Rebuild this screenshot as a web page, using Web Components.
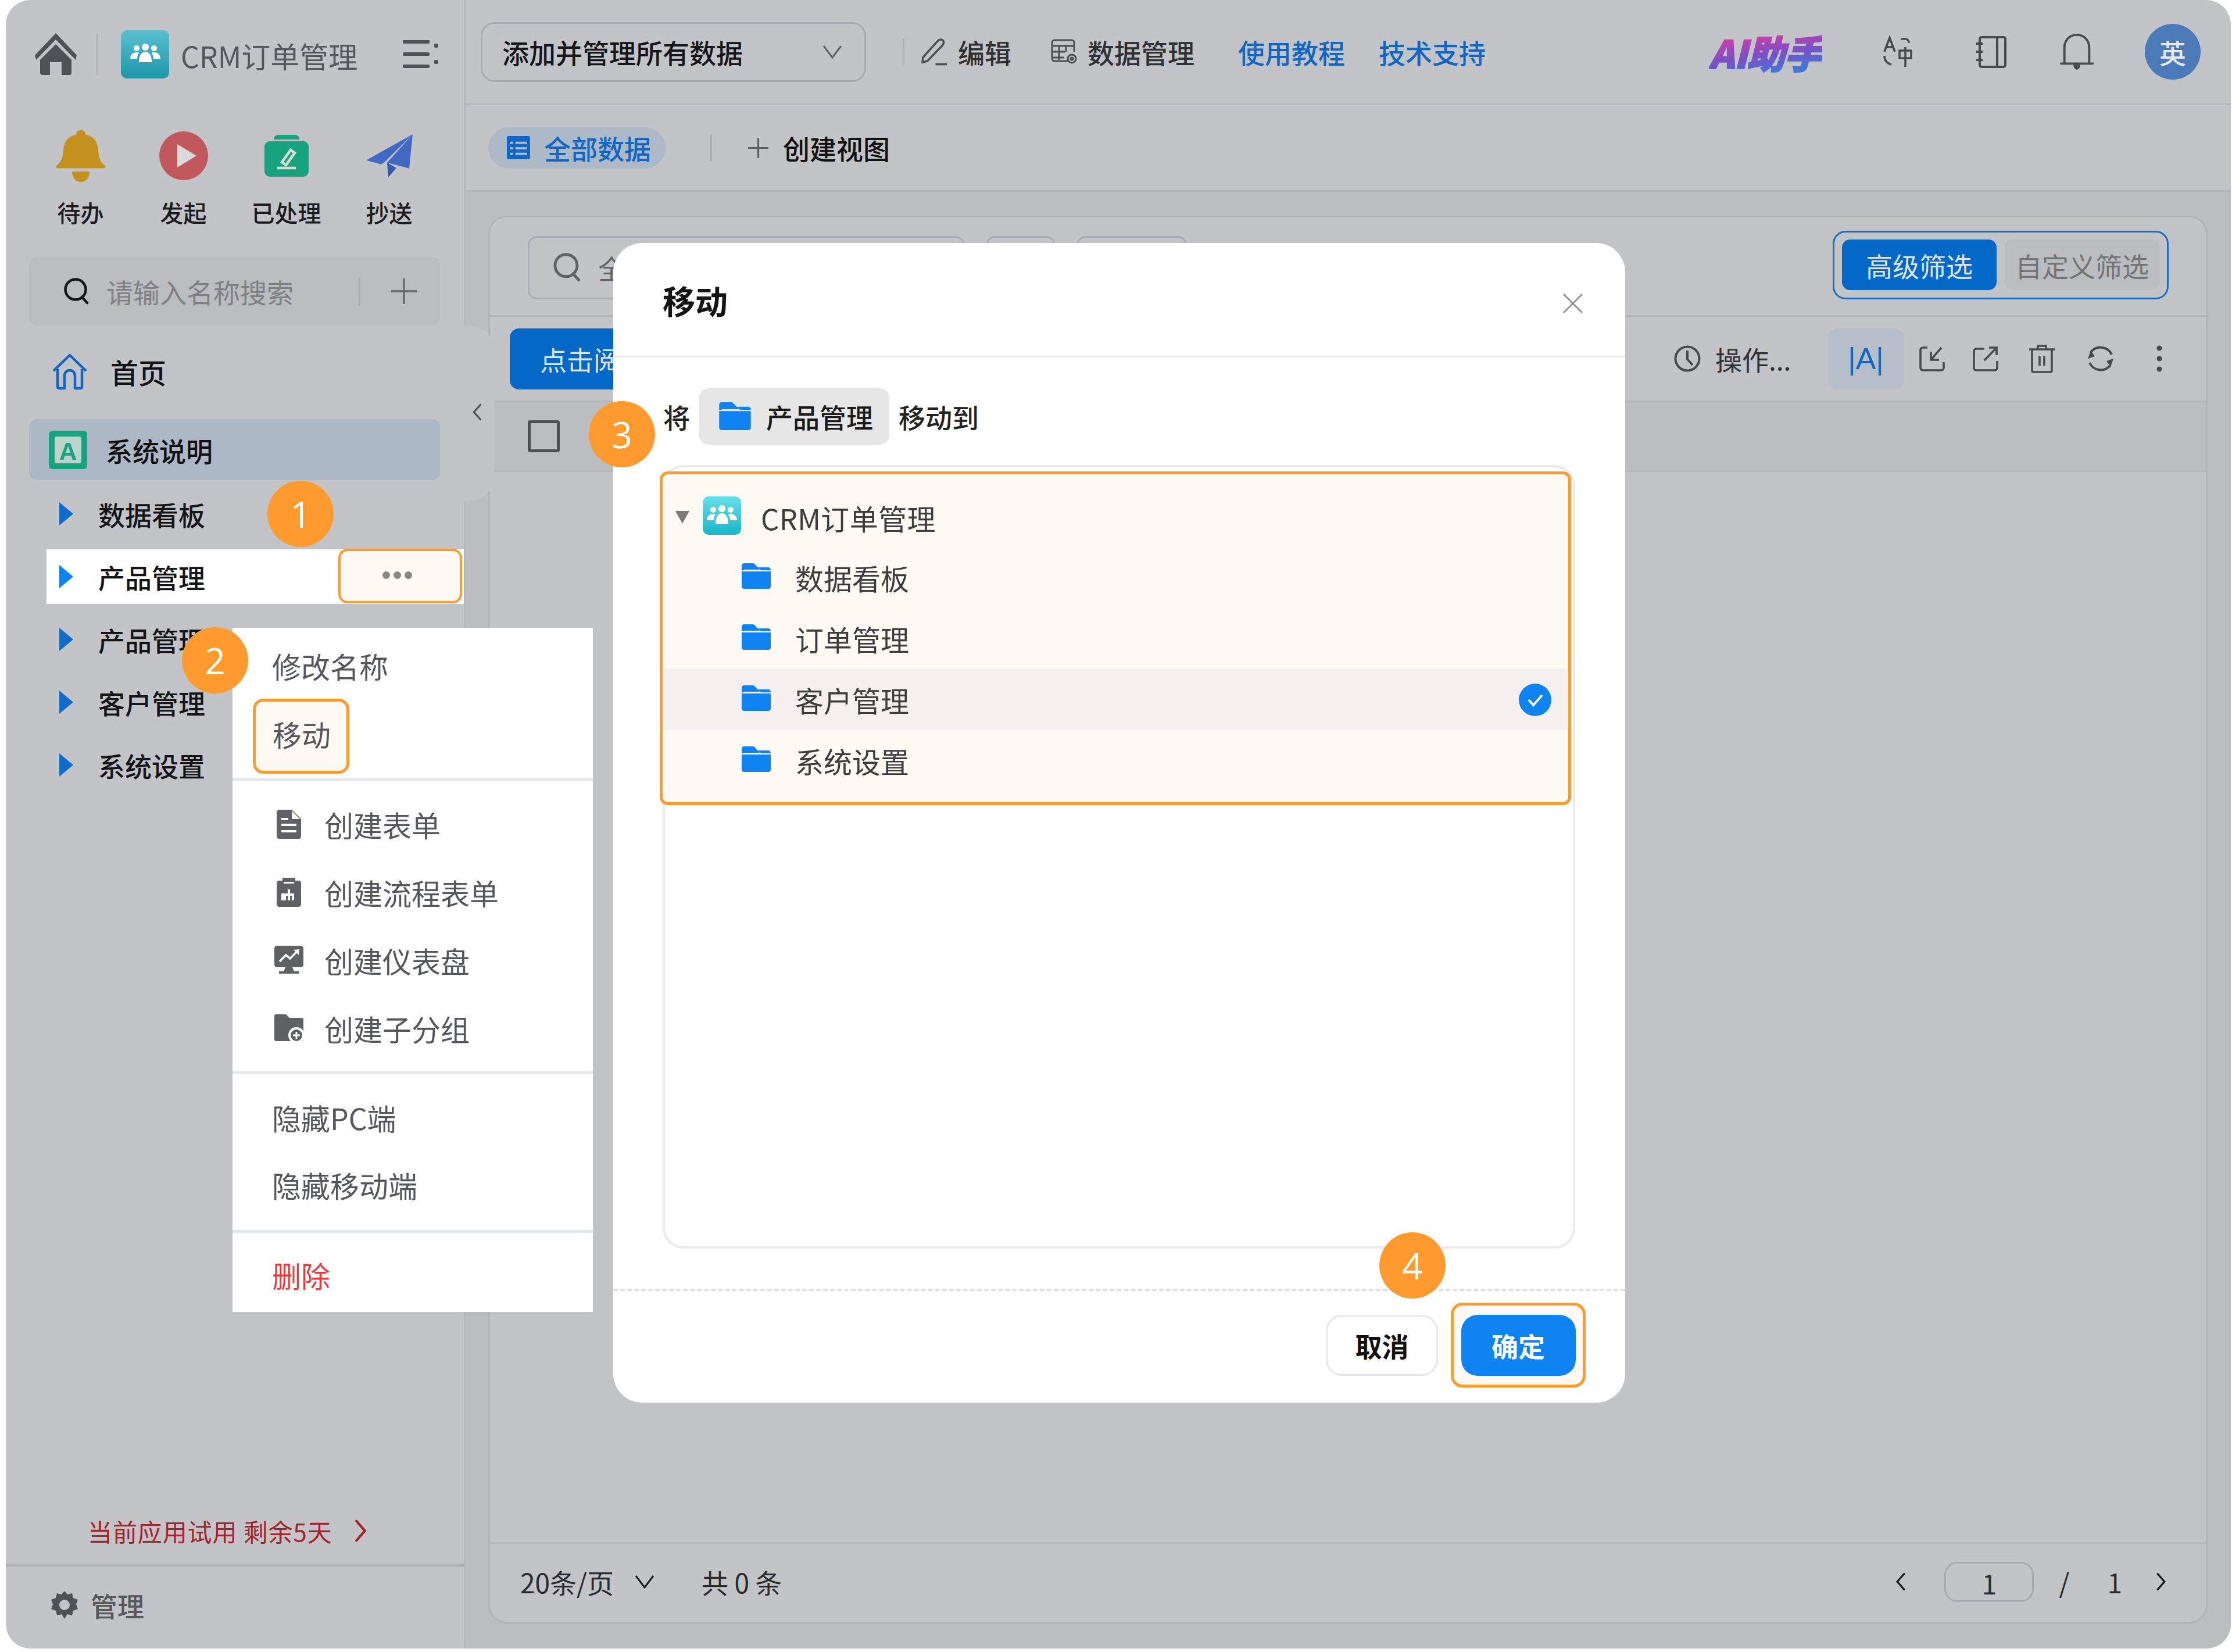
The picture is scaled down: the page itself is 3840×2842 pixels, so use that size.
<!DOCTYPE html>
<html lang="zh-CN">
<head>
<meta charset="utf-8">
<title>CRM订单管理</title>
<style>
    html, body { margin: 0; padding: 0; background: #fff; }
    body {
        position: relative;
        width: 3840px;
        height: 2842px;
        overflow: hidden;
        font-family: "Noto Sans CJK SC", "Liberation Sans", sans-serif;
        color: #111;
    }
</style>
</head>
<body>
<app-shell>
    <app-sidebar slot="side"></app-sidebar>
    <top-bar slot="main"></top-bar>
    <tab-bar slot="main"></tab-bar>
    <data-card slot="main"></data-card>
</app-shell>
<context-menu></context-menu>
<move-dialog></move-dialog>
<step-badge n="1" x="517" y="884"></step-badge>
<step-badge n="2" x="370" y="1136"></step-badge>
<step-badge n="3" x="1070" y="747"></step-badge>
<step-badge n="4" x="2430" y="2177"></step-badge>

<script>
const ICONS = {
    home: `<svg viewBox="0 0 72 72"><path fill="currentColor" d="M36 0 72 38l-2 8-34-35L2 46l-2-8z"/><path fill="currentColor" d="M36 19 63 46v22a4 4 0 0 1-4 4H46V50H26v22H13a4 4 0 0 1-4-4V46z"/></svg>`,
    menu: `<svg viewBox="0 0 62 48" fill="currentColor"><rect x="0" y="0" width="46" height="6" rx="2"/><rect x="0" y="21" width="46" height="6" rx="2"/><rect x="0" y="42" width="46" height="6" rx="2"/><rect x="54" y="6" width="7" height="7" rx="2"/><rect x="54" y="34" width="7" height="7" rx="2"/></svg>`,
    group: `<svg viewBox="0 0 66 66" fill="#fff"><circle cx="33" cy="21" r="6"/><circle cx="18" cy="23" r="5"/><circle cx="48" cy="23" r="5"/><path d="M22 47c0-12 5-18 11-18s11 6 11 18z"/><path d="M7 41c0-7 5-11 11-11 2 0 3 0 4 1-2 3-3 6-3 10zM59 41c0-7-5-11-11-11-2 0-3 0-4 1 2 3 3 6 3 10z"/></svg>`,
    bell: `<svg viewBox="0 0 84 118" preserveAspectRatio="none"><path fill="#c4901e" d="M42 0c5 0 8 4 8 10 16 5 21 18 22 36 1 15 3 27 12 35 1 3 0 6-3 6H3c-3 0-4-3-3-6 9-8 11-20 12-35 1-18 6-31 22-36 0-6 3-10 8-10z"/><path fill="#c4901e" d="M27 94h30c0 14-6 24-15 24s-15-10-15-24z"/></svg>`,
    play: `<svg viewBox="0 0 84 84"><circle cx="42" cy="42" r="42" fill="#c0585c"/><path fill="#d9d9dc" d="M31 22 64 42 31 62z"/></svg>`,
    done: `<svg viewBox="0 0 76 72" preserveAspectRatio="none"><path fill="#17a37d" d="M24 0h28c5 0 8 3 8 8H16c0-5 3-8 8-8z"/><rect y="11" width="76" height="61" rx="9" fill="#17a37d"/><path fill="none" stroke="#d5dcd9" stroke-width="4.5" d="M22 57h32M30 47 45 26l7 5-15 21z"/></svg>`,
    send: `<svg viewBox="0 0 80 106" preserveAspectRatio="none"><path fill="#4169c4" d="M80 0 0 64l26 10 6-6z"/><path fill="#4169c4" d="M80 0 36 70l38 14z"/><path fill="#3459b0" d="M36 70 38 106l14-23z"/></svg>`,
    search: `<svg viewBox="0 0 42 46" fill="none" stroke="currentColor" stroke-width="4.5"><circle cx="20" cy="20" r="17.5"/><path d="m31 33 9 10" stroke-linecap="round"/></svg>`,
    plus: `<svg viewBox="0 0 44 44" stroke="currentColor" stroke-width="4"><path d="M22 0v44M0 22h44"/></svg>`,
    house: `<svg viewBox="0 0 60 62" fill="none" stroke="currentColor" stroke-width="4.5" stroke-linejoin="round"><path d="M2 30 30 3l28 27M9 27v30c0 2 1 3 3 3h9V38a9 9 0 0 1 18 0v22h9c2 0 3-1 3-3V27"/></svg>`,
    letter: `<svg viewBox="0 0 66 66"><rect width="66" height="66" rx="6" fill="#17a37d"/><rect x="10" y="10" width="46" height="46" rx="4" fill="#bcd3cb"/><text x="33" y="50" font-size="42" font-weight="700" text-anchor="middle" fill="#17a37d" font-family="Liberation Sans">A</text></svg>`,
    caret: `<svg viewBox="0 0 24 40"><path fill="currentColor" d="M0 0 24 20 0 40z"/></svg>`,
    chevDown: `<svg viewBox="0 0 34 24" fill="none" stroke="currentColor" stroke-width="3"><path d="m2 2 15 20L32 2"/></svg>`,
    chevLeft: `<svg viewBox="0 0 20 36" fill="none" stroke="currentColor" stroke-width="4" stroke-linecap="round"><path d="M17 2 3 18l14 16"/></svg>`,
    chevRight: `<svg viewBox="0 0 20 36" fill="none" stroke="currentColor" stroke-width="4" stroke-linecap="round"><path d="m3 2 14 16L3 34"/></svg>`,
    pencil: `<svg viewBox="0 0 48 48" fill="none" stroke="currentColor" stroke-width="3.6" stroke-linejoin="round"><path d="M4 34 30 5c3-3 7-3 9-1s2 6-1 9L12 40l-9 3z"/><path d="M26 46h20"/></svg>`,
    datagrid: `<svg viewBox="0 0 46 44" fill="none" stroke="currentColor" stroke-width="3"><path d="M30 38H6c-2 0-4-2-4-4V6c0-2 2-4 4-4h30c2 0 4 2 4 4v16"/><path d="M2 12h38M2 22h22M2 32h20M14 12v24M26 12v10"/><circle cx="36" cy="34" r="7"/><circle cx="36" cy="34" r="2"/></svg>`,
    translate: `<svg viewBox="0 0 52 52" preserveAspectRatio="none" fill="none" stroke="currentColor" stroke-width="3.6"><path d="M4 26 13 2l9 24M8 18h10"/><path d="M32 4h8c4 0 6 3 6 7M4 33c0 8 4 13 12 15"/><path d="M30 24h20v13H30zM40 18v34"/></svg>`,
    book: `<svg viewBox="0 0 52 55" preserveAspectRatio="none" fill="none" stroke="currentColor" stroke-width="4"><rect x="6" y="2" width="44" height="51" rx="3"/><path d="M36 2v51M0 13h11M0 27h11M0 41h11" /></svg>`,
    notify: `<svg viewBox="0 0 60 66" fill="none" stroke="currentColor" stroke-width="4" stroke-linejoin="round" stroke-linecap="round"><path d="M8 54V26C8 12 18 3 30 3s22 9 22 23v28M2 54h56"/><path d="M25 56c0 4 2 8 5 8s5-4 5-8" fill="currentColor" stroke-width="2"/></svg>`,
    table: `<svg viewBox="0 0 38 38"><rect width="38" height="38" rx="3" fill="currentColor"/><path stroke="#b4bfcc" stroke-width="3.5" d="M5 11h5M14 11h19M5 20h5M14 20h19M5 29h5M14 29h19"/></svg>`,
    clock: `<svg viewBox="0 0 46 46" fill="none" stroke="currentColor" stroke-width="4"><circle cx="23" cy="23" r="20.5"/><path d="M23 9v15l9 10"/></svg>`,
    importIcon: `<svg viewBox="0 0 44 44" fill="none" stroke="currentColor" stroke-width="3.6"><path d="M14 3H6C4 3 2 5 2 7v31c0 2 2 4 4 4h32c2 0 4-2 4-4V28"/><path d="M38 3 20 24M20 10v14h14"/></svg>`,
    exportIcon: `<svg viewBox="0 0 44 44" fill="none" stroke="currentColor" stroke-width="3.6"><path d="M20 5H6C4 5 2 7 2 9v29c0 2 2 4 4 4h32c2 0 4-2 4-4V26"/><path d="M20 25 41 3M28 3h13v13"/></svg>`,
    trash: `<svg viewBox="0 0 44 50" fill="none" stroke="currentColor" stroke-width="3.6"><path d="M0 9h44M15 9V3h14v6M5 9v37c0 1 1 2 2 2h30c1 0 2-1 2-2V9M18 21v16M26 21v16"/></svg>`,
    refresh: `<svg viewBox="0 0 48 48" fill="none" stroke="currentColor" stroke-width="4"><path d="M7 13A21 21 0 0 1 43 17M41 35A21 21 0 0 1 5 31"/><path fill="currentColor" stroke="none" d="m2 24 5-14 7 10zM46 24l-5 14-7-10z"/></svg>`,
    kebab: `<svg viewBox="0 0 12 46" fill="currentColor"><circle cx="6" cy="5" r="4.5"/><circle cx="6" cy="23" r="4.5"/><circle cx="6" cy="41" r="4.5"/></svg>`,
    gear: `<svg viewBox="0 0 46 48"><path fill="currentColor" fill-rule="evenodd" d="M23 0l5 6 8-2 2 8 8 3-3 8 3 8-8 3-2 8-8-2-5 8-5-8-8 2-2-8-8-3 3-8-3-8 8-3 2-8 8 2zM23 15a9 9 0 1 0 0 18 9 9 0 0 0 0-18z"/></svg>`,
    folder: `<svg viewBox="0 0 50 44"><path fill="currentColor" d="M4 0h15c2 0 3 1 4 2l8 9H4zM0 14h50V40c0 2-2 4-4 4H4c-2 0-4-2-4-4zM0 4c0-2 2-4 4-4v12H0z"/><path fill="currentColor" d="M27 7h19c2 0 4 2 4 5H33z"/></svg>`,
    fileDoc: `<svg viewBox="0 0 42 50"><path fill="currentColor" d="M4 0h22l16 16v30c0 2-2 4-4 4H4c-2 0-4-2-4-4V4c0-2 2-4 4-4z"/><path fill="#fff" d="M26 2v14h14zM8 24h26v4H8zM8 35h26v4H8z"/><path fill="#fff" d="M8 14h12v4H8z"/></svg>`,
    flowDoc: `<svg viewBox="0 0 42 50"><path fill="currentColor" d="M10 0h22v5h6c2 0 4 2 4 4v37c0 2-2 4-4 4H4c-2 0-4-2-4-4V9c0-2 2-4 4-4h6z"/><path fill="#fff" d="M12 10h18v-3H12zM19 20h4v7h7v12h-4v-8h-3v8h-4v-8h-3v8H8V27h11z"/></svg>`,
    board: `<svg viewBox="0 0 50 50"><path fill="currentColor" d="M5 0h40c3 0 5 2 5 5v27c0 3-2 5-5 5H31l3 7h8v4H8v-4h8l3-7H5c-3 0-5-2-5-5V5c0-3 2-5 5-5z"/><path fill="none" stroke="#fff" stroke-width="3.5" d="m9 27 11-11 7 6 12-12"/><path fill="#fff" d="m33 7 10-1-1 10z"/></svg>`,
    subfolder: `<svg viewBox="0 0 50 48"><path fill="currentColor" d="M3 0h17l6 6h21c2 0 3 1 3 3v34c0 2-1 3-3 3H3c-2 0-3-1-3-3V3c0-2 1-3 3-3z"/><circle cx="38" cy="36" r="14" fill="#fff"/><circle cx="38" cy="36" r="10" fill="currentColor"/><path stroke="#fff" stroke-width="3" d="M38 30v12M32 36h12"/></svg>`,
    close: `<svg viewBox="0 0 34 34" fill="none" stroke="currentColor" stroke-width="2.6"><path d="m1 1 32 32M33 1 1 33"/></svg>`,
    check: `<svg viewBox="0 0 56 56"><circle cx="28" cy="28" r="28" fill="#1083f2"/><path fill="none" stroke="#fff" stroke-width="4" d="m17 28 8 9 15-17"/></svg>`,
    caretDown: `<svg viewBox="0 0 24 22"><path fill="currentColor" d="M0 0h24L12 22z"/></svg>`,
};

// small inline svg icon, size comes from the w and h attributes
class UiIcon extends HTMLElement {
    constructor() {
        super();
        this.attachShadow({mode: 'open'});
    }
    connectedCallback() {
        const w = this.getAttribute('w') || 40;
        const h = this.getAttribute('h') || w;
        this.shadowRoot.innerHTML = `
            <style>
                :host { display: inline-flex; flex: none; width: ${w}px; height: ${h}px; }
                svg { width: 100%; height: 100%; display: block; overflow: visible; }
            </style>
            ${ICONS[this.getAttribute('name')]}`;
    }
}

class AppIcon extends HTMLElement {
    constructor() {
        super();
        const root = this.attachShadow({mode: 'open'});
        root.innerHTML = `
            <style>
                :host { display: flex; flex: none; align-items: center; justify-content: center; border-radius: 10px;
                    width: var(--size, 66px); height: var(--size-h, 66px);
                    background: linear-gradient(180deg, var(--top, #5bc0cf), var(--bottom, #1c96a8)); }
            </style>
            <ui-icon name="group" w="66" h="66"></ui-icon>`;
    }
}

class AppShell extends HTMLElement {
    constructor() {
        super();
        const root = this.attachShadow({mode: 'open'});
        root.innerHTML = `
            <style>
                :host { display: flex; margin-left: 10px; width: 3828px; height: 2836px; overflow: hidden;
                    border-radius: 42px; background: #c3c4c8; position: relative; }
                .side { display: flex; flex: none; width: 788px; }
                .main { flex: 1; min-width: 0; display: flex; flex-direction: column; border-left: 3px solid #b4b6bb; }
            </style>
            <div class="side"><slot name="side"></slot></div>
            <div class="main"><slot name="main"></slot></div>`;
    }
}

class AppSidebar extends HTMLElement {
    constructor() {
        super();
        const root = this.attachShadow({mode: 'open'});
        const shortcut = (icon, w, h, label) => `
            <div class="shortcut">
                <div class="sc-icon"><ui-icon name="${icon}" w="${w}" h="${h}"></ui-icon></div>
                <span>${label}</span>
            </div>`;
        root.innerHTML = `
            <style>
                :host { display: flex; flex-direction: column; width: 100%; height: 100%; position: relative; }
                .logo { height: 186px; flex: none; display: flex; align-items: center; padding-left: 50px; color: #4f5156; }
                .sep { width: 3px; height: 72px; background: #b2b4b8; margin: 0 39px 0 34px; }
                app-icon { --size: 83px; --size-h: 83px; margin-right: 20px; }
                .name { font-size: 50px; line-height: 60px; color: #55575c; width: 382px; white-space: nowrap; padding-top: 4px; }
                .shortcuts { display: grid; grid-template-columns: repeat(4, 177px); padding: 28px 0 0 40px; height: 228px; box-sizing: border-box; }
                .shortcut { display: flex; flex-direction: column; align-items: center; font-size: 40px; line-height: 56px; color: #1c1c1e; font-weight: 500; }
                .sc-icon { height: 108px; display: flex; align-items: center; margin-bottom: 15px; }
                .search { margin: 28px 41px 0 40px; height: 118px; flex: none; background: #bbbcc0; border-radius: 14px;
                    display: flex; align-items: center; padding-left: 60px; box-sizing: border-box; color: #15161a; }
                .search span { font-size: 46px; color: #7e8084; margin-left: 31px; width: 434px; }
                .search i { width: 3px; height: 48px; background: #a9abaf; }
                .search .plus { color: #6f7175; margin-left: 53px; }
                .home { height: 161px; flex: none; display: flex; align-items: center; padding-left: 80px; font-size: 48px; color: #121316; padding-bottom: 4px; box-sizing: border-box; font-weight: 500; }
                .home ui-icon { color: #1066c5; margin-right: 40px; }
                .selected { margin: 0 41px 0 40px; height: 105px; flex: none; background: #acb8c6; border-radius: 14px; display: flex;
                    align-items: center; padding-left: 34px; font-size: 46px; color: #111; font-weight: 500; }
                .selected ui-icon { margin-right: 32px; }
                .tree { flex: none; margin-top: 4px; display: flex; flex-direction: column; }
                .row { height: 94px; margin: 7px 0 7px 70px; display: flex; align-items: center; font-size: 46px; color: #141518; padding-left: 22px; font-weight: 500; }
                .row ui-icon { color: #0f6cc9; margin-right: 43px; }
                .row.hot { background: #fff; position: relative; }
                .row.hot ui-icon { color: #1083f2; }
                .more { position: absolute; right: 3px; top: -1px; width: 213px; height: 94px; box-sizing: border-box;
                    background: #fef9f3; border: 4px solid #ff9a2e; border-radius: 16px; display: flex; align-items: center; justify-content: center; gap: 6px; padding: 0 10px 4px 0; }
                .more b { width: 13px; height: 13px; border-radius: 50%; background: #8a8885; }
                .fill { flex: 1; }
                .trial { height: 80px; flex: none; display: flex; align-items: center; padding-left: 141px; font-size: 42px; color: #a5222a; white-space: nowrap; margin-bottom: 17px; letter-spacing: .9px; }
                .trial ui-icon { margin-left: 38px; }
                .manage { height: 146px; flex: none; border-top: 5px solid #adafb3; box-sizing: border-box; display: flex; align-items: center; padding: 0 0 10px 78px;
                    font-size: 46px; color: #56585c; font-weight: 500; }
                .manage ui-icon { margin-right: 22px; color: #4f5156; }
                .bump { position: absolute; left: 788px; top: 560px; width: 52px; height: 302px; background: #c3c4c8; border-radius: 0 42px 42px 0;
                    display: flex; align-items: center; justify-content: center; color: #4f5156; z-index: 3; padding: 0 6px 4px 0; box-sizing: border-box; }
            </style>
            <div class="logo">
                <ui-icon name="home" w="72" h="72"></ui-icon>
                <div class="sep"></div>
                <app-icon></app-icon>
                <span class="name">CRM订单管理</span>
                <ui-icon name="menu" w="62" h="48"></ui-icon>
            </div>
            <div class="shortcuts">
                ${shortcut('bell', 84, 89, '待办')}
                ${shortcut('play', 84, 84, '发起')}
                ${shortcut('done', 76, 72, '已处理')}
                ${shortcut('send', 80, 74, '抄送')}
            </div>
            <div class="search">
                <ui-icon name="search" w="42" h="46"></ui-icon>
                <span>请输入名称搜索</span>
                <i></i>
                <ui-icon class="plus" name="plus" w="44" h="44"></ui-icon>
            </div>
            <div class="home"><ui-icon name="house" w="60" h="62"></ui-icon>首页</div>
            <div class="selected"><ui-icon name="letter" w="66" h="66"></ui-icon>系统说明</div>
            <div class="tree">
                <div class="row"><ui-icon name="caret" w="24" h="40"></ui-icon>数据看板</div>
                <div class="row hot"><ui-icon name="caret" w="24" h="40"></ui-icon>产品管理<div class="more"><b></b><b></b><b></b></div></div>
                <div class="row"><ui-icon name="caret" w="24" h="40"></ui-icon>产品管理</div>
                <div class="row"><ui-icon name="caret" w="24" h="40"></ui-icon>客户管理</div>
                <div class="row"><ui-icon name="caret" w="24" h="40"></ui-icon>系统设置</div>
            </div>
            <div class="fill"></div>
            <div class="trial">当前应用试用 剩余5天<ui-icon name="chevRight" w="21" h="39"></ui-icon></div>
            <div class="manage"><ui-icon name="gear" w="46" h="48"></ui-icon>管理</div>
            <div class="bump"><ui-icon name="chevLeft" w="16" h="36"></ui-icon></div>`;
    }
}

class TopBar extends HTMLElement {
    constructor() {
        super();
        const root = this.attachShadow({mode: 'open'});
        root.innerHTML = `
            <style>
                :host { display: flex; align-items: center; flex: none; height: 181px; box-sizing: border-box; border-bottom: 3px solid #b4b6bb;
                    padding: 0 52px 0 26px; font-size: 46px; color: #2a2b2e; white-space: nowrap; font-weight: 500; }
                .select { width: 663px; height: 103px; box-sizing: border-box; border: 3px solid #a8abb2; border-radius: 24px; display: flex;
                    align-items: center; padding: 0 38px 0 34px; color: #15161a; justify-content: space-between; }
                .select ui-icon { color: #606266; }
                .sep { width: 3px; height: 46px; background: #abadb2; margin: 0 28px 0 63px; }
                .item { display: flex; align-items: center; color: #2f3033; }
                .item ui-icon { color: #4c4e52; margin-right: 17px; }
                .link { color: #0f66c4; }
                .ai { font-size: 66px; font-weight: 900; font-style: italic; letter-spacing: -1px; line-height: 78px;
                    background: linear-gradient(172deg, #d33ca5 18%, #7a50c8 55%, #3f78d8 88%); -webkit-background-clip: text; background-clip: text; color: transparent;
                    -webkit-text-stroke: 2px transparent; }
                .fill { flex: 1; }
                ui-icon.tool { color: #47494d; }
                .avatar { width: 96px; height: 96px; border-radius: 50%; background: #4a7ab8; color: #e6e8ee; display: flex; align-items: center; justify-content: center; font-size: 46px; }
            </style>
            <div class="select">添加并管理所有数据<ui-icon name="chevDown" w="34" h="24"></ui-icon></div>
            <div class="sep"></div>
            <div class="item" style="margin-right:68px"><ui-icon name="pencil" w="47" h="48"></ui-icon>编辑</div>
            <div class="item" style="margin-right:75px"><ui-icon name="datagrid" w="46" h="44"></ui-icon>数据管理</div>
            <div class="link" style="margin-right:58px">使用教程</div>
            <div class="link">技术支持</div>
            <div class="fill"></div>
            <div class="ai">AI助手</div>
            <ui-icon class="tool" name="translate" w="52" h="52" style="margin-left:103px"></ui-icon>
            <ui-icon class="tool" name="book" w="52" h="55" style="margin-left:110px"></ui-icon>
            <ui-icon class="tool" name="notify" w="60" h="64" style="margin-left:91px"></ui-icon>
            <div class="avatar" style="margin-left:87px">英</div>`;
    }
}

class TabBar extends HTMLElement {
    constructor() {
        super();
        const root = this.attachShadow({mode: 'open'});
        root.innerHTML = `
            <style>
                :host { display: flex; align-items: center; flex: none; height: 149px; box-sizing: border-box; border-bottom: 3px solid #b4b6bb;
                    padding: 0 0 0 39px; font-size: 46px; font-weight: 500; }
                .chip { width: 305px; height: 71px; border-radius: 36px; background: #adb9c7; color: #0f66c4; display: flex; align-items: center; padding-left: 32px; box-sizing: border-box; }
                .chip ui-icon { margin-right: 24px; }
                i { width: 3px; height: 46px; background: #abadb2; margin-left: 77px; margin-right: 62px; }
                .plus { color: #5b5d61; margin-right: 25px; }
            </style>
            <div class="chip"><ui-icon name="table" w="40" h="40"></ui-icon>全部数据</div>
            <i></i>
            <ui-icon class="plus" name="plus" w="35" h="35"></ui-icon>
            <span>创建视图</span>`;
    }
}

class DataCard extends HTMLElement {
    constructor() {
        super();
        const root = this.attachShadow({mode: 'open'});
        const tool = (name, w, h, x) => `<ui-icon name="${name}" w="${w}" h="${h}" style="margin-left:${x}px"></ui-icon>`;
        root.innerHTML = `
            <style>
                :host { flex: 1; min-height: 0; display: flex; background: #bcbdc1; padding: 41px 40px 43px 39px; box-sizing: border-box; }
                .card { flex: 1; display: flex; flex-direction: column; background: #c3c4c8; border: 3px solid #b2b4b9; border-radius: 32px; box-sizing: border-box; font-size: 46px; overflow: hidden; }
                .filters { height: 171px; flex: none; display: flex; align-items: center; padding: 0 64px 0 65px; border-bottom: 3px solid #b4b6bb; box-sizing: border-box; }
                .input { width: 752px; height: 109px; border: 3px solid #a8abb2; border-radius: 16px; box-sizing: border-box; display: flex; align-items: center; padding-left: 40px; color: #606266; margin-top: 4px; }
                .input span { margin-left: 30px; }
                .box { height: 109px; border: 3px solid #a8abb2; border-radius: 16px; box-sizing: border-box; margin: 4px 0 0 36px; }
                .fill { flex: 1; }
                .seg { width: 578px; height: 118px; box-sizing: border-box; border: 3px solid #1a6fc4; border-radius: 22px; display: flex; align-items: center; gap: 14px; padding: 0 13px; margin-top: -5px; }
                .seg div { flex: 1; height: 87px; border-radius: 14px; display: flex; align-items: center; justify-content: center; background: #bbbcc0; color: #727376; }
                .seg div.on { background: #0468c8; color: #dfe3ea; }
                .actions { height: 147px; flex: none; display: flex; align-items: center; padding: 0 74px 0 34px; border-bottom: 3px solid #b4b6bb; box-sizing: border-box; color: #47494d; }
                .read { width: 300px; height: 105px; border-radius: 16px; background: #0468c8; color: #dfe3ea; display: flex; align-items: center; padding-left: 52px; box-sizing: border-box; }
                .op { color: #2f3033; margin-left: 25px; width: 193px; }
                .aa { width: 132px; height: 105px; border-radius: 16px; background: #b5bec9; color: #0f66c4; display: flex; align-items: center; justify-content: center; font-size: 52px; font-family: "Liberation Sans", sans-serif; }
                .head { height: 120px; flex: none; background: #bcbdc1; border-bottom: 3px solid #b4b6bb; box-sizing: border-box; display: flex; align-items: center; padding-left: 65px; }
                .check { width: 55px; height: 55px; box-sizing: border-box; border: 5px solid #4d4f53; border-radius: 4px; }
                .foot { height: 137px; flex: none; border-top: 3px solid #b4b6bb; box-sizing: border-box; display: flex; align-items: center; padding: 0 68px 4px 52px; color: #2a2b2e; font-size: 46px; }
                .foot ui-icon { color: #1a1b1e; }
                .page { width: 154px; height: 69px; box-sizing: border-box; border: 3px solid #a8abb2; border-radius: 22px; text-align: center; line-height: 66px; margin: 0 43px 0 66px; }
            </style>
            <div class="card">
                <div class="filters">
                    <div class="input"><ui-icon name="search" w="48" h="50"></ui-icon><span>全部</span></div>
                    <div class="box" style="width:120px"></div>
                    <div class="box" style="width:190px"></div>
                    <div class="fill"></div>
                    <div class="seg"><div class="on">高级筛选</div><div>自定义筛选</div></div>
                </div>
                <div class="actions">
                    <div class="read">点击阅读</div>
                    <div class="fill"></div>
                    <ui-icon name="clock" w="46" h="46"></ui-icon>
                    <span class="op">操作...</span>
                    <div class="aa">|A|</div>
                    ${tool('importIcon', 44, 44, 26)}
                    ${tool('exportIcon', 44, 44, 48)}
                    ${tool('trash', 44, 50, 53)}
                    ${tool('refresh', 48, 48, 55)}
                    ${tool('kebab', 12, 46, 71)}
                </div>
                <div class="head"><div class="check"></div></div>
                <div class="fill"></div>
                <div class="foot">
                    <span>20条/页</span>
                    <ui-icon name="chevDown" w="36" h="24" style="margin:0 80px 0 35px"></ui-icon>
                    <span>共 0 条</span>
                    <div class="fill"></div>
                    <ui-icon name="chevLeft" w="18" h="30"></ui-icon>
                    <div class="page">1</div>
                    <span>/</span>
                    <span style="margin:0 58px 0 65px">1</span>
                    <ui-icon name="chevRight" w="18" h="30"></ui-icon>
                </div>
            </div>`;
    }
}

class ContextMenu extends HTMLElement {
    constructor() {
        super();
        const root = this.attachShadow({mode: 'open'});
        const item = (icon, w, h, label) => `<div class="it ic"><span class="slot"><ui-icon name="${icon}" w="${w}" h="${h}"></ui-icon></span><span>${label}</span></div>`;
        root.innerHTML = `
            <style>
                :host { position: absolute; left: 400px; top: 1080px; width: 620px; height: 1177px; background: #fff; z-index: 5;
                    display: flex; flex-direction: column; font-size: 50px; color: #55575c; }
                .it { height: 117px; flex: none; display: flex; align-items: center; padding-left: 68px; box-sizing: border-box; }
                .it.ic { padding-left: 72px; }
                .slot { width: 50px; display: flex; justify-content: center; margin-right: 36px; color: #5f6165; }
                .rename { height: 122px; padding-top: 8px; }
                .move { height: 129px; width: 166px; margin: 0 0 8px 35px; padding: 0 0 10px 29px; background: #fef9f3; border: 5px solid #ff9a2e; border-radius: 18px; }
                .div { height: 5px; flex: none; background: #e5e7ee; }
                .g1 { padding-top: 15px; }
                .g2 { padding-top: 17px; }
                .g2 .it { height: 116px; }
                .del { color: #ea3b3b; padding-top: 26px; }
            </style>
            <div class="it rename">修改名称</div>
            <div class="it move">移动</div>
            <div class="div"></div>
            <div class="g1">
                ${item('fileDoc', 42, 50, '创建表单')}
                ${item('flowDoc', 42, 50, '创建流程表单')}
                ${item('board', 50, 50, '创建仪表盘')}
                ${item('subfolder', 50, 48, '创建子分组')}
            </div>
            <div class="div" style="margin-top:15px"></div>
            <div class="g2">
                <div class="it">隐藏PC端</div>
                <div class="it">隐藏移动端</div>
            </div>
            <div class="div" style="margin-top:20px"></div>
            <div class="it del">删除</div>`;
    }
}

class MoveDialog extends HTMLElement {
    constructor() {
        super();
        const root = this.attachShadow({mode: 'open'});
        const node = (label, extra) => `<div class="node ${extra ? 'sel' : ''}"><ui-icon name="folder" w="50" h="44"></ui-icon><span>${label}</span>${extra ? '<ui-icon class="ok" name="check" w="56" h="56"></ui-icon>' : ''}</div>`;
        root.innerHTML = `
            <style>
                :host { position: absolute; left: 1055px; top: 418px; width: 1741px; height: 1995px; background: #fff; border-radius: 50px; z-index: 4;
                    display: flex; flex-direction: column; overflow: hidden; color: #222; }
                .title { height: 197px; flex: none; box-sizing: border-box; border-bottom: 3px solid #ececee; display: flex; align-items: center; justify-content: space-between;
                    padding: 0 73px 0 85px; font-size: 56px; font-weight: 700; color: #141414; }
                .title ui-icon { color: #8d8d90; margin-top: 13px; }
                .line { height: 100px; margin-top: 51px; flex: none; display: flex; align-items: center; padding-left: 86px; font-size: 46px; font-weight: 500; }
                .chip { height: 97px; width: 327px; margin: 0 16px; border-radius: 16px; background: #e6e6e6; display: flex; align-items: center; padding-left: 34px; box-sizing: border-box; color: #1a1a1a; }
                .chip ui-icon { color: #1083f2; margin-right: 26px; }
                .tree { flex: none; margin: 34px 0 0 85px; width: 1570px; height: 1348px; border: 4px solid #ebebee; border-radius: 36px; box-sizing: border-box; position: relative; }
                .mark { position: absolute; left: -9px; top: 7px; width: 1568px; height: 574px; box-sizing: border-box; background: #fef9f3; border: 5px solid #ff9a2e; border-radius: 14px;
                    padding-top: 23px; }
                .root { height: 102px; display: flex; align-items: center; padding-left: 22px; font-size: 49px; color: #3d3d3d; }
                .root .tri { color: #7b7b7b; margin-right: 23px; }
                .root app-icon { --size: 66px; --size-h: 66px; --top: #65dfea; --bottom: #19b6c9; margin: -6px 34px 0 0; }
                .root span { letter-spacing: .4px; }
                .node { height: 105px; display: flex; align-items: center; padding-left: 136px; font-size: 49px; color: #3d3d3d; position: relative; }
                .node ui-icon { color: #1083f2; margin-right: 42px; margin-top: -6px; }
                .node.sel { background: #f5f0ed; }
                .node .ok { position: absolute; right: 29px; top: 25px; margin: 0; }
                .fill { flex: 1; }
                .foot { height: 196px; flex: none; border-top: 4px dashed #dfdfe1; box-sizing: border-box; display: flex; align-items: center; justify-content: flex-end; padding: 0 68px 6px 0; }
                .btn { height: 105px; border-radius: 28px; display: flex; align-items: center; justify-content: center; font-size: 46px; font-weight: 700; box-sizing: border-box; }
                .cancel { width: 193px; border: 3px solid #e6e8ee; color: #111; margin-right: 22px; }
                .okwrap { width: 232px; height: 146px; display: flex; align-items: center; justify-content: center; box-sizing: border-box; background: #fef9f3; border: 5px solid #ff9a2e; border-radius: 20px; }
                .confirm { width: 197px; background: #1083f2; color: #fff; }
            </style>
            <div class="title">移动<ui-icon name="close" w="34" h="34"></ui-icon></div>
            <div class="line">将<div class="chip"><ui-icon name="folder" w="55" h="48"></ui-icon>产品管理</div>移动到</div>
            <div class="tree">
                <div class="mark">
                    <div class="root"><ui-icon class="tri" name="caretDown" w="24" h="22"></ui-icon><app-icon></app-icon><span>CRM订单管理</span></div>
                    ${node('数据看板')}
                    ${node('订单管理')}
                    ${node('客户管理', true)}
                    ${node('系统设置')}
                </div>
            </div>
            <div class="fill"></div>
            <div class="foot">
                <div class="btn cancel">取消</div>
                <div class="okwrap"><div class="btn confirm">确定</div></div>
            </div>`;
    }
}

class StepBadge extends HTMLElement {
    constructor() {
        super();
        this.attachShadow({mode: 'open'});
    }
    connectedCallback() {
        const x = this.getAttribute('x') - 57;
        const y = this.getAttribute('y') - 57;
        this.shadowRoot.innerHTML = `
            <style>
                :host { position: absolute; left: ${x}px; top: ${y}px; width: 114px; height: 114px; border-radius: 50%; background: #ff9a2e;
                    color: #fff; font-size: 62px; display: flex; align-items: center; justify-content: center; z-index: 6;
                    font-family: "Open Sans", "Liberation Sans", sans-serif; }
            </style>
            ${this.getAttribute('n')}`;
    }
}

customElements.define('ui-icon', UiIcon);
customElements.define('app-icon', AppIcon);
customElements.define('app-shell', AppShell);
customElements.define('app-sidebar', AppSidebar);
customElements.define('top-bar', TopBar);
customElements.define('tab-bar', TabBar);
customElements.define('data-card', DataCard);
customElements.define('context-menu', ContextMenu);
customElements.define('move-dialog', MoveDialog);
customElements.define('step-badge', StepBadge);
</script>
</body>
</html>
